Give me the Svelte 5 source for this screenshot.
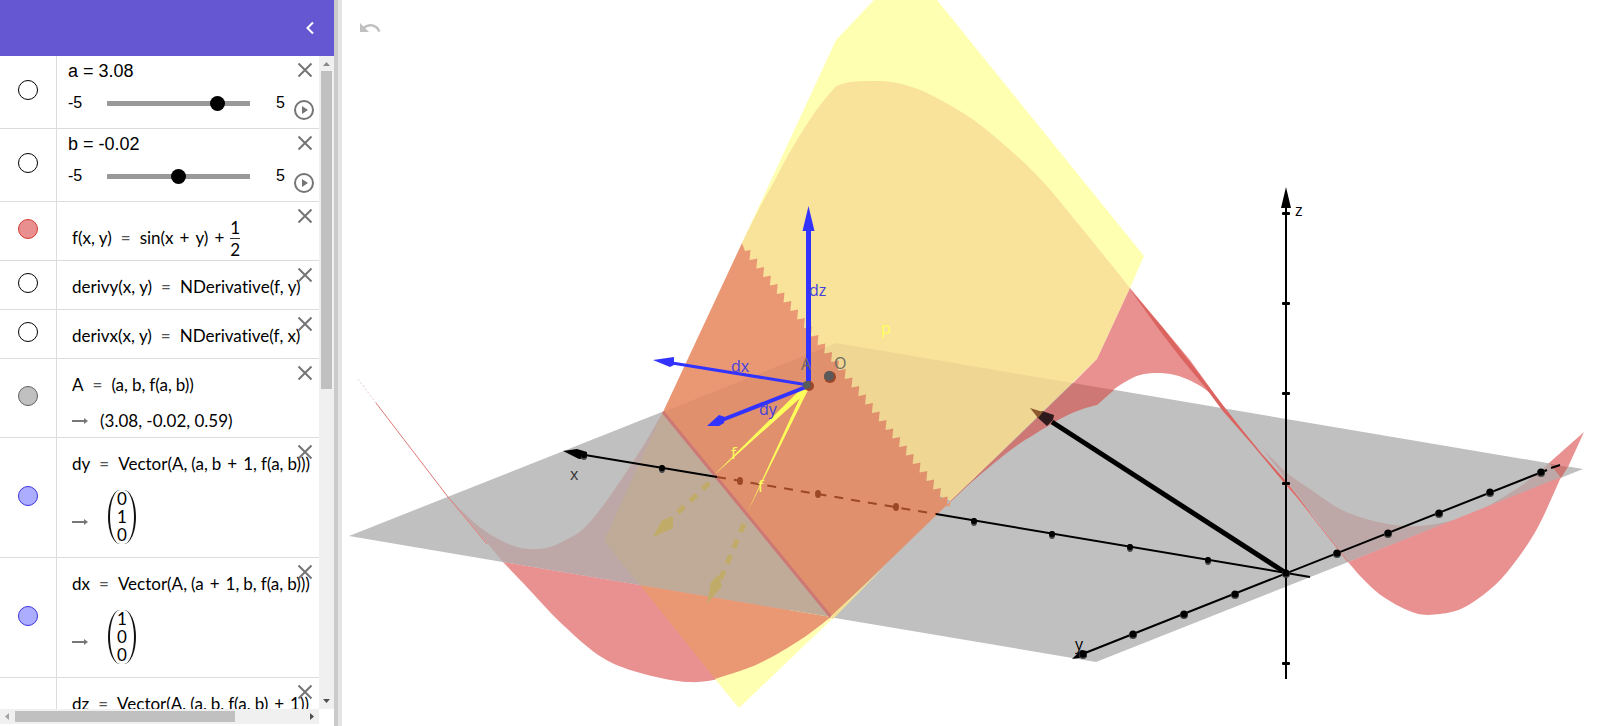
<script lang="ts">
  type Point = [number, number];

  type Row = {
    kind: "slider" | "formula";
    name: string;
    value?: number;
    tokens?: string[];
    fraction?: [string, string];
    result?: string;
    vector?: number[];
    color?: string;
  };

  let rows = $state<Row[]>([
    { kind: "slider", name: "a", value: 3.08 },
    { kind: "slider", name: "b", value: -0.02 },
    {
      kind: "formula",
      name: "f",
      tokens: ["f(x", ",", "y)", "=", "sin(x", "+", "y)", "+"],
      fraction: ["1", "2"],
      color: "red",
    },
    { kind: "formula", name: "derivy", tokens: ["derivy(x", ",", "y)", "=", "NDerivative(f", ",", "y)"] },
    { kind: "formula", name: "derivx", tokens: ["derivx(x", ",", "y)", "=", "NDerivative(f", ",", "x)"] },
    {
      kind: "formula",
      name: "A",
      tokens: ["A", "=", "(a", ",", "b", ",", "f(a", ",", "b))"],
      result: "(3.08, -0.02, 0.59)",
      color: "gray",
    },
    {
      kind: "formula",
      name: "dy",
      tokens: ["dy", "=", "Vector(A", ",", "(a", ",", "b", "+", "1", ",", "f(a", ",", "b)))"],
      vector: [0, 1, 0],
      color: "blue",
    },
    {
      kind: "formula",
      name: "dx",
      tokens: ["dx", "=", "Vector(A", ",", "(a", "+", "1", ",", "b", ",", "f(a", ",", "b)))"],
      vector: [1, 0, 0],
      color: "blue",
    },
    {
      kind: "formula",
      name: "dz",
      tokens: ["dz", "=", "Vector(A", ",", "(a", ",", "b", ",", "f(a", ",", "b)", "+", "1))"],
      vector: [0, 0, 1],
      color: "blue",
    },
  ]);

  function tokenClass(token: string) {
    if (token === "=") return "eq";
    if (token === "+") return "plus";
    if (token === ",") return "comma";
    return "";
  }

  // Smooth path through the points (Catmull-Rom to Bezier)
  function curve(points: Point[]) {
    let d = `M${points[0].join(" ")}`;
    for (let i = 0; i < points.length - 1; i++) {
      const p0 = points[i - 1] ?? points[i];
      const p1 = points[i];
      const p2 = points[i + 1];
      const p3 = points[i + 2] ?? p2;
      const c1 = [p1[0] + (p2[0] - p0[0]) / 6, p1[1] + (p2[1] - p0[1]) / 6];
      const c2 = [p2[0] - (p3[0] - p1[0]) / 6, p2[1] - (p3[1] - p1[1]) / 6];
      d += `C${c1.join(" ")} ${c2.join(" ")} ${p2.join(" ")}`;
    }
    return d;
  }

  const leftBelow = curve([[503, 562], [525, 585], [562, 624], [603, 658], [644, 674], [688, 682], [722, 678], [758, 664], [800, 640], [831, 617]]);
  const orangeBelow = curve([[715, 679], [758, 664], [800, 640], [831, 617]]);
  const leftInside = curve([[448, 496], [464, 513], [485, 531], [511, 545], [530, 549], [550, 547], [575, 535], [588, 524], [605, 503], [625, 474], [645, 443], [663, 412]]);
  const hillLeft = curve([[742, 243], [760, 207], [776, 178], [791, 150], [815, 112], [836, 86]]);
  const hillRight = curve([[836, 86], [850, 82], [872, 81], [892, 82], [915, 88], [935, 97], [975, 121], [1018, 157], [1045, 184], [1080, 226], [1110, 263], [1130, 288]]).replace("M", "L");
  const fold = curve([[1097, 405], [1112, 391], [1125, 382], [1140, 375], [1157, 373], [1175, 375], [1193, 382], [1210, 393], [1226, 410]]);
  const foldShade = curve([[951, 501], [974, 480], [1012, 449], [1035, 434], [1060, 419], [1080, 410], [1097, 405]]);
  const rightInside = curve([[1262, 448], [1286, 472], [1310, 489], [1340, 509], [1370, 520], [1395, 525], [1420, 526], [1450, 521], [1480, 510], [1500, 499], [1525, 483], [1549, 463]]);
  const rightBelow = curve([[1348, 562], [1365, 581], [1385, 598], [1415, 613], [1440, 614], [1465, 607], [1494, 586], [1515, 562], [1538, 527], [1561, 477]]);

  // Sawtooth edge where the surface crosses the tangent plane
  const seam = Array.from({ length: 30 }, (_, i) => {
    const x = 750.5 + i * 6.8;
    const y = 250 + i * 8.5;
    return `${x},${y} ${x - 1},${y + 10} ${x + 2},${y + 9.5}`;
  }).join(" ");

  const xTicks = [[584, 455], [662, 468], [974, 521], [1052, 534], [1130, 547], [1208, 560]];
  const hiddenTicks = [[740, 481], [818, 494], [896, 507]];
  const yTicks = [[1083, 654], [1133, 634], [1184, 614], [1235, 594], [1286, 573], [1337, 553], [1388, 533], [1439, 513], [1490, 492], [1541, 472]];
  const zTicks = [213, 303, 393, 483, 663];
</script>

<div class="app">
  <aside class="sidebar">
    <header>
      <button class="collapse" aria-label="Close algebra view">
        <svg width="24" height="24" viewBox="0 0 24 24"><path d="M15 6.500 9.500 12l5.500 5.500" /></svg>
      </button>
    </header>

    <div class="algebra">
      <div class="rows">
        {#each rows as row}
          <div class="row">
            <div class="marble-cell">
              <button class="marble {row.color ?? ''}" aria-label="Show or hide {row.name}"></button>
            </div>
            {#if row.kind === "slider"}
              <div class="slider-cell">
                <label for="slider-{row.name}">{row.name} = {row.value}</label>
                <div class="slider">
                  <span class="min">-5</span>
                  <input id="slider-{row.name}" type="range" min="-5" max="5" step="0.02" bind:value={row.value} />
                  <span class="max">5</span>
                </div>
              </div>
            {:else}
              <div class="formula-cell" class:tall={row.vector} class:short={row.result}>
                <div class="math" class:has-fraction={row.fraction}>
                  {#each row.tokens ?? [] as token}<span class={tokenClass(token)}>{token}</span>{/each}
                  {#if row.fraction}
                    <span class="fraction"><span>{row.fraction[0]}</span><span>{row.fraction[1]}</span></span>
                  {/if}
                </div>
                {#if row.result || row.vector}
                  <div class="output">
                    <svg class="arrow" width="16" height="8" viewBox="0 0 16 8">
                      <path d="M0 4h13" /><path class="head" d="M12 1l4 3-4 3z" />
                    </svg>
                    {#if row.vector}
                      <div class="vector">
                        {#each row.vector as n}<span>{n}</span>{/each}
                      </div>
                    {:else}
                      <span>{row.result}</span>
                    {/if}
                  </div>
                {/if}
              </div>
            {/if}
            <div class="tools">
              <button aria-label="Delete {row.name}">
                <svg width="20" height="20" viewBox="0 0 20 20"><path d="M3.500 3.500l13 13M16.500 3.500l-13 13" /></svg>
              </button>
              {#if row.kind === "slider"}
                <button aria-label="Play {row.name}">
                  <svg width="20" height="20" viewBox="0 0 20 20">
                    <circle cx="9" cy="10" r="9" /><path class="solid" d="M7 6l6 4-6 4z" />
                  </svg>
                </button>
              {/if}
            </div>
          </div>
        {/each}
      </div>

      <div class="vbar">
        <svg width="15" height="15" viewBox="0 0 15 15"><path fill="#8a8a8a" d="M4 10l3.500-4L11 10z" /></svg>
        <div class="vtrack"><div class="vthumb"></div></div>
        <svg width="15" height="15" viewBox="0 0 15 15"><path fill="#505050" d="M4 5l3.500 4L11 5z" /></svg>
      </div>
      <div class="hbar">
        <svg width="15" height="15" viewBox="0 0 15 15"><path fill="#a3a3a3" d="M9 4L5 7.500 9 11z" /></svg>
        <div class="htrack"><div class="hthumb"></div></div>
        <svg width="15" height="15" viewBox="0 0 15 15"><path fill="#505050" d="M6 4l4 3.500L6 11z" /></svg>
      </div>
    </div>
  </aside>

  <div class="splitter"></div>

  <main>
    <button class="undo" aria-label="Undo">
      <svg width="24" height="24" viewBox="0 0 24 24">
        <path d="M12.500 8c-2.650 0-5.050 1-6.900 2.600L2 7v9h9l-3.600-3.600c1.400-1.200 3.100-1.900 5.100-1.900 3.500 0 6.500 2.300 7.600 5.500l2.400-.8C21.100 11 17.100 8 12.500 8z" />
      </svg>
    </button>

    <svg class="scene" viewBox="342 0 1258 726" preserveAspectRatio="xMinYMin meet" role="img" aria-label="3D graphics view">
      <!-- xy plane -->
      <polygon fill="#c0c0c0" points="349,536 836,343 1583,469 1096,662" />

      <!-- surface: left trough -->
      <path fill="#e99090" d="{leftBelow}z" />
      <path fill="#bea8a7" d="{leftInside}L831 617L503 562z" />
      <path fill="none" stroke="#e07a77" stroke-width="1" d="M376 403L448 497L487 544" />
      <path fill="none" stroke="#e6cccc" stroke-width="1" d="M358 379L376 403" stroke-dasharray="2 2" />

      <!-- tangent plane -->
      <polygon fill="#ffffb2" points="874,0 836,40 742,243 1130,288 1144,256 937,0" />
      <polygon fill="#ffffb2" points="715,679 739,708 833,618 800,600" />
      <path fill="#ea9874" d="{orangeBelow}L640 585z" />
      <polygon fill="#c0ab98" points="663,412 604,541 640,585 831,617" />
      <path fill="#f9e39b" d="{hillLeft}{hillRight}L1097 359L951 501L831 450L742 300z" />
      <polygon fill="#ea9874" points="663,412 742,243 745,251 {seam} 951,501 831,617" />
      <polygon fill="#300" fill-opacity="0.05" points="663,412 836,343 1073,383 951,501 831,617" />
      <path fill="none" stroke="#cd7875" stroke-width="3" d="M663 412L831 617" />
      <polygon fill="#f4df95" points="830,617 833,619 886,565" />
      <path fill="none" stroke="#cd7875" stroke-width="1" d="M951 501L993 461" />

      <!-- surface: middle fold -->
      <path fill="#e99090" d="{fold}L1190 360L1130 288L1097 359L1073 383z" />
      <path fill="#cd7875" d="{foldShade}L1114 390L1073 383z" />
      <polygon fill="#db6460" points="1129,288 1163,328 1190,362 1222,404 1240,427 1262,454 1286,481 1313,516 1286,485 1250,442 1222,410 1205,387 1180,357 1160,331" />

      <!-- surface: right trough -->
      <path fill="#bea8a7" d="{rightInside}L1561 478L1348 562z" />
      <path fill="none" stroke="#e07a77" stroke-width="1" d="M1286 483L1348 562" />
      <path fill="#e99090" d="{rightBelow}z" />
      <polygon fill="#e99090" points="1549,463 1584,432 1568,467" />
      <polygon fill="#cd7875" points="1549,463 1568,467 1561,478" />

      <!-- axes -->
      <g stroke="#000" stroke-width="2">
        <path d="M1286 205V679" />
        <path d="M585 455L717 477M936 514L1310 577" />
        <path d="M1080 655L1547 470M1551 468l9-3" />
        <path d="M1286 573L1052 422" stroke-width="5" />
      </g>
      <path stroke="#9c4727" stroke-width="2" stroke-dasharray="9 8" d="M717 477L936 514" />
      <path d="M1286 187l5 21h-10zM563 451l14-2 10 3v6l-8 1zM1072 659l9-9 6 1v6z" />
      <path fill="#2e1a1c" d="M1042 411L1054 415L1053 420L1047 426L1037 417z" />
      <path fill="#8d5a30" d="M1030 408L1043 412L1038 418z" />
      {#each zTicks as y}<rect x="1282" y={y - 1} width="8" height="3" rx="1" />{/each}
      {#each xTicks as [x, y]}
        <ellipse cx={x} cy={y + 1} rx="3" ry="4" fill="#444" /><circle cx={x} cy={y} r="3" />
      {/each}
      {#each yTicks as [x, y]}
        <circle cx={x} cy={y + 1} r="4" fill="#444" /><circle cx={x} cy={y} r="3.500" />
      {/each}
      {#each hiddenTicks as [x, y]}<ellipse cx={x} cy={y} rx="3" ry="4" fill="#9c4727" />{/each}

      <!-- gradient vectors f -->
      <g fill="#c0ab68" stroke="#c0ab68">
        <path fill="none" stroke-width="5" stroke-dasharray="9 8" d="M709 483L668 522M744 524L720 580" />
        <path stroke="none" d="M653 537L662 520L673 517L673 528zM707 604L711 582L718 575L722 586z" />
      </g>
      <path fill="#ffff5c" d="M803 387L713 476L808 391zM804 389L747 513L808 390z" />

      <!-- unit vectors -->
      <g fill="#3333ff" stroke="#3333ff">
        <path stroke-width="5" d="M808.500 385V230" />
        <path stroke-width="3" d="M808 385L672 363" />
        <path stroke-width="4" d="M806 387L722 420" />
        <path stroke="none" d="M808.500 206l6 25h-12zM653 360l21-3v8l-4 2zM707 426l12-11 6 2-1 6-5 3z" />
      </g>
      <circle cx="809" cy="386" r="5" fill="#9c4727" />
      <circle cx="807" cy="385" r="4" fill="#5a5a5a" />
      <circle cx="830" cy="377" r="6" fill="#9c4727" />
      <circle cx="829" cy="376" r="5" fill="#5a5a5a" />

      <g class="labels">
        <text x="1295" y="216">z</text>
        <text x="570" y="480" fill="#333">x</text>
        <text x="1075" y="650">y</text>
        <text x="801" y="370" fill="#76665a">A</text>
        <text x="834" y="369" fill="#6c6c62">O</text>
        <g fill="#4440df">
          <text x="809" y="296">dz</text>
          <text x="731" y="372">dx</text>
          <text x="759" y="415">dy</text>
        </g>
        <g fill="#ffff5c">
          <text x="881" y="334">p</text>
          <text x="731" y="459">f</text>
          <text x="758" y="492">f</text>
        </g>
      </g>
    </svg>
  </main>
</div>

<style>
  :global(body) {
    margin: 0;
  }

  .app {
    display: flex;
    height: 100vh;
    overflow: hidden;
    background: #fff;
    font-family: "Liberation Sans", Arial, sans-serif;
    color: #000;
  }

  button {
    padding: 0;
    border: 0;
    background: none;
    cursor: pointer;
  }

  svg {
    display: block;
  }

  .sidebar {
    display: flex;
    flex-direction: column;
    flex: none;
    width: 334px;
    padding-bottom: 2px;
    box-sizing: border-box;
  }

  header {
    display: flex;
    flex: none;
    justify-content: flex-end;
    align-items: center;
    height: 56px;
    padding-right: 12px;
    background: #6557d2;
  }

  .collapse path {
    fill: none;
    stroke: #fff;
    stroke-width: 2;
  }

  .algebra {
    display: grid;
    flex: 1;
    grid-template: minmax(0, 1fr) 15px / minmax(0, 1fr) 15px;
    min-height: 0;
  }

  .rows {
    overflow: auto;
    scrollbar-width: none;
  }

  .row {
    position: relative;
    display: flex;
    border-bottom: 1px solid #dcdcdc;
  }

  .marble-cell {
    display: flex;
    flex: none;
    justify-content: center;
    align-items: center;
    width: 57px;
    padding-bottom: 4px;
    box-sizing: border-box;
    border-right: 1px solid #dcdcdc;
  }

  .marble {
    width: 20px;
    height: 20px;
    border: 1px solid #000;
    border-radius: 50%;
    background: #fff;
  }

  .marble.red {
    border-color: #d33b32;
    background: #e98f8f;
  }

  .marble.gray {
    border-color: #606060;
    background: #c0c0c0;
  }

  .marble.blue {
    border-color: #3a33dd;
    background: #adadff;
  }

  .slider-cell {
    flex: 1;
    padding: 5px 34px 15px 11px;
    font-size: 16px;
  }

  .slider-cell label {
    display: block;
    font-size: 18px;
    line-height: 20px;
  }

  .slider {
    display: flex;
    align-items: center;
    height: 20px;
    margin-top: 12px;
    line-height: 20px;
  }

  .min {
    width: 39px;
  }

  .max {
    width: 35px;
    text-align: right;
  }

  input[type="range"] {
    flex: 1;
    min-width: 0;
    height: 15px;
    margin: 0;
    appearance: none;
    background: linear-gradient(#999, #999) center / 100% 5px no-repeat;
  }

  input[type="range"]::-webkit-slider-thumb {
    width: 15px;
    height: 15px;
    appearance: none;
    border-radius: 50%;
    background: #000;
  }

  .formula-cell {
    flex: 1;
    padding: 14px 0 10px 15px;
    font-family: Lato, "Open Sans", sans-serif;
    font-size: 17px;
    font-variant-ligatures: none;
    line-height: 24px;
    white-space: nowrap;
  }

  .formula-cell.short {
    padding-bottom: 4px;
  }

  .formula-cell.tall {
    padding-bottom: 13px;
  }

  .math {
    display: flex;
    align-items: center;
  }

  .math.has-fraction {
    height: 44px;
    margin-bottom: -10px;
  }

  .eq {
    margin: 0 9px;
    color: #555;
  }

  .plus {
    margin: 0 6px;
  }

  .comma {
    margin-right: 4px;
  }

  .fraction {
    display: flex;
    flex-direction: column;
    line-height: 21px;
    text-align: center;
  }

  .fraction span:first-child {
    border-bottom: 1px solid #333;
  }

  .output {
    display: flex;
    align-items: center;
    gap: 12px;
    margin-top: 12px;
  }

  .tall .output {
    margin-top: 14px;
  }

  .arrow {
    fill: #777;
    stroke: #777;
    stroke-width: 2;
  }

  .tall .arrow {
    margin-top: 10px;
  }

  .arrow .head {
    stroke: none;
  }

  .vector {
    display: flex;
    flex-direction: column;
    margin-left: 8px;
    padding: 0 7px;
    border: 2px solid #111;
    border-width: 0 2px;
    border-radius: 12px / 27px;
    line-height: 18px;
  }

  .tools {
    position: absolute;
    top: 4px;
    right: 4px;
    display: flex;
    flex-direction: column;
    gap: 20px;
  }

  .tools svg {
    overflow: visible;
    fill: none;
    stroke: #757575;
    stroke-width: 2;
  }

  .tools .solid {
    fill: #757575;
    stroke: none;
  }

  .vbar,
  .hbar {
    display: flex;
    background: #f0f0f0;
  }

  .vbar {
    flex-direction: column;
  }

  .vtrack,
  .htrack {
    flex: 1;
  }

  .vthumb {
    height: 51%;
    margin: 0 2px;
    background: #c0c0c0;
  }

  .hthumb {
    width: 76%;
    height: 11px;
    margin: 2px 0;
    background: #c0c0c0;
  }

  .splitter {
    flex: none;
    width: 4px;
    border-right: 4px solid #e4e4e4;
    background: #cbcbcb;
  }

  main {
    position: relative;
    flex: 1;
    min-width: 0;
  }

  .scene {
    width: 100%;
    height: 100%;
  }

  .undo {
    position: absolute;
    top: 16px;
    left: 16px;
    fill: #c0c0c0;
  }

  .labels {
    font-family: "Open Sans", "Noto Sans", sans-serif;
    font-size: 16px;
  }
</style>
